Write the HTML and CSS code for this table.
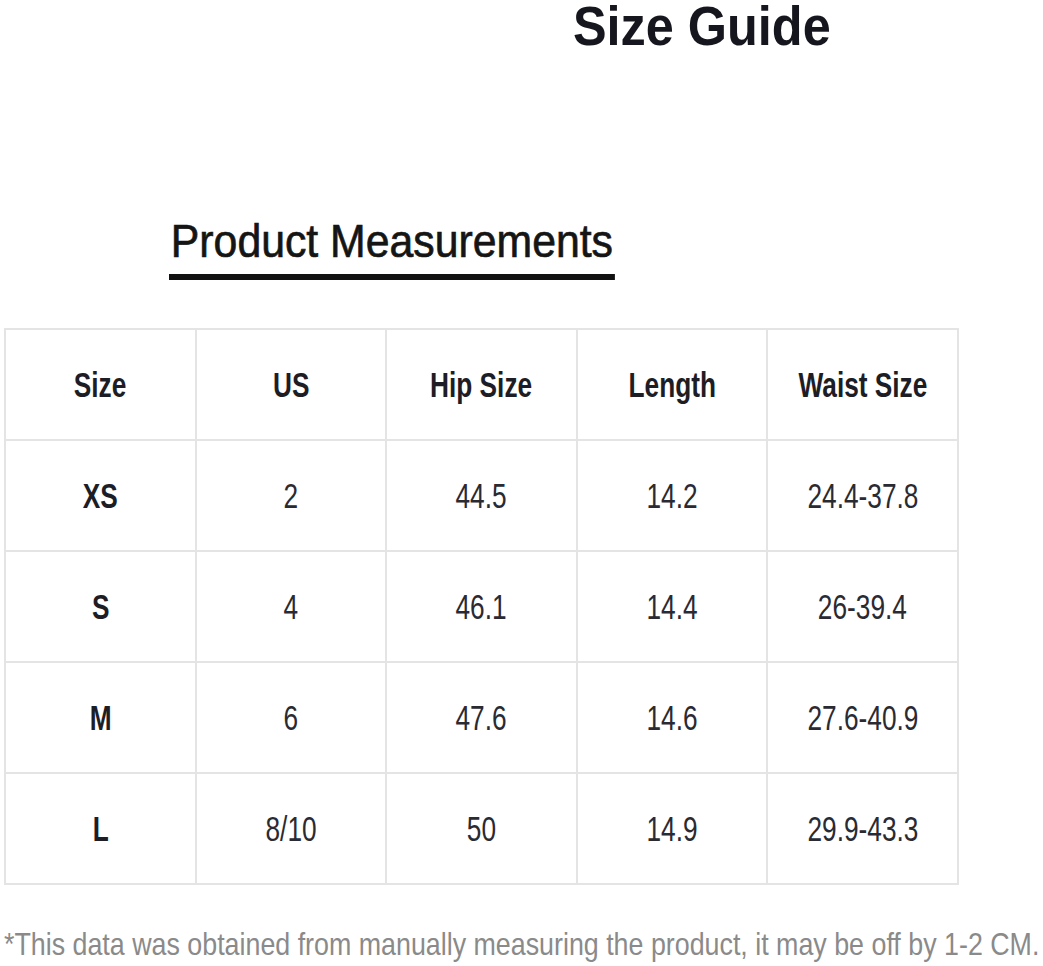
FILE: index.html
```html
<!DOCTYPE html>
<html lang="en">
<head>
<meta charset="utf-8">
<title>Size Guide</title>
<link rel="stylesheet" href="styles.css">
</head>
<body>
<h1 class="title"><span class="title-text">Size Guide</span></h1>
<h2 class="subtitle"><span class="subtitle-text">Product Measurements</span></h2>
<table class="sizes">
  <thead>
    <tr>
      <th><span class="cell-text">Size</span></th>
      <th><span class="cell-text">US</span></th>
      <th><span class="cell-text">Hip Size</span></th>
      <th><span class="cell-text">Length</span></th>
      <th><span class="cell-text">Waist Size</span></th>
    </tr>
  </thead>
  <tbody>
    <tr>
      <th><span class="cell-text">XS</span></th>
      <td><span class="cell-text">2</span></td>
      <td><span class="cell-text">44.5</span></td>
      <td><span class="cell-text">14.2</span></td>
      <td><span class="cell-text">24.4-37.8</span></td>
    </tr>
    <tr>
      <th><span class="cell-text">S</span></th>
      <td><span class="cell-text">4</span></td>
      <td><span class="cell-text">46.1</span></td>
      <td><span class="cell-text">14.4</span></td>
      <td><span class="cell-text">26-39.4</span></td>
    </tr>
    <tr>
      <th><span class="cell-text">M</span></th>
      <td><span class="cell-text">6</span></td>
      <td><span class="cell-text">47.6</span></td>
      <td><span class="cell-text">14.6</span></td>
      <td><span class="cell-text">27.6-40.9</span></td>
    </tr>
    <tr>
      <th><span class="cell-text">L</span></th>
      <td><span class="cell-text">8/10</span></td>
      <td><span class="cell-text">50</span></td>
      <td><span class="cell-text">14.9</span></td>
      <td><span class="cell-text">29.9-43.3</span></td>
    </tr>
  </tbody>
</table>
<p class="note"><span class="note-text">*This data was obtained from manually measuring the product, it may be off by 1-2 CM.</span></p>
</body>
</html>
```

FILE: styles.css
```css
html, body {
  margin: 0;
  padding: 0;
  background: #ffffff;
}

body {
  font-family: "Liberation Sans", Arial, sans-serif;
  color: #222;
  overflow-x: hidden;
}

.title {
  margin: 0;
  padding-left: 573px;
  height: 51px;
  font-size: 56px;
  font-weight: bold;
  line-height: 52px;
  color: #15161e;
}

.title-text {
  display: inline-block;
  transform: scaleX(0.9);
  transform-origin: left center;
}

.subtitle {
  margin: 166px 0 0 169px;
  font-size: 47px;
  font-weight: normal;
  line-height: 47px;
  color: #151515;
}

.subtitle-text {
  display: inline-block;
  padding: 0 2px 10px;
  border-bottom: 6px solid #111;
  -webkit-text-stroke: 0.7px #151515;
  transform: scaleX(0.91);
  transform-origin: left center;
}

.sizes {
  margin: 48px 0 0 4px;
  width: 955px;
  table-layout: fixed;
  border-collapse: collapse;
}

.sizes tr {
  height: 111px;
}

.sizes th,
.sizes td {
  border: 2px solid #e4e4e4;
  padding: 0;
  text-align: center;
  vertical-align: middle;
  font-size: 35px;
  white-space: nowrap;
}

.sizes th {
  font-weight: bold;
  color: #1d1d26;
}

.sizes td {
  font-weight: normal;
  color: #2a2a33;
}

.cell-text {
  display: inline-block;
  transform: scaleX(0.75);
  transform-origin: center center;
}

.note {
  margin: 39px 0 0 4px;
  font-size: 32px;
  line-height: 40px;
  color: #8a8a8a;
  white-space: nowrap;
  overflow: hidden;
}

.note-text {
  display: inline-block;
  transform: scaleX(0.838);
  transform-origin: left center;
}
```
